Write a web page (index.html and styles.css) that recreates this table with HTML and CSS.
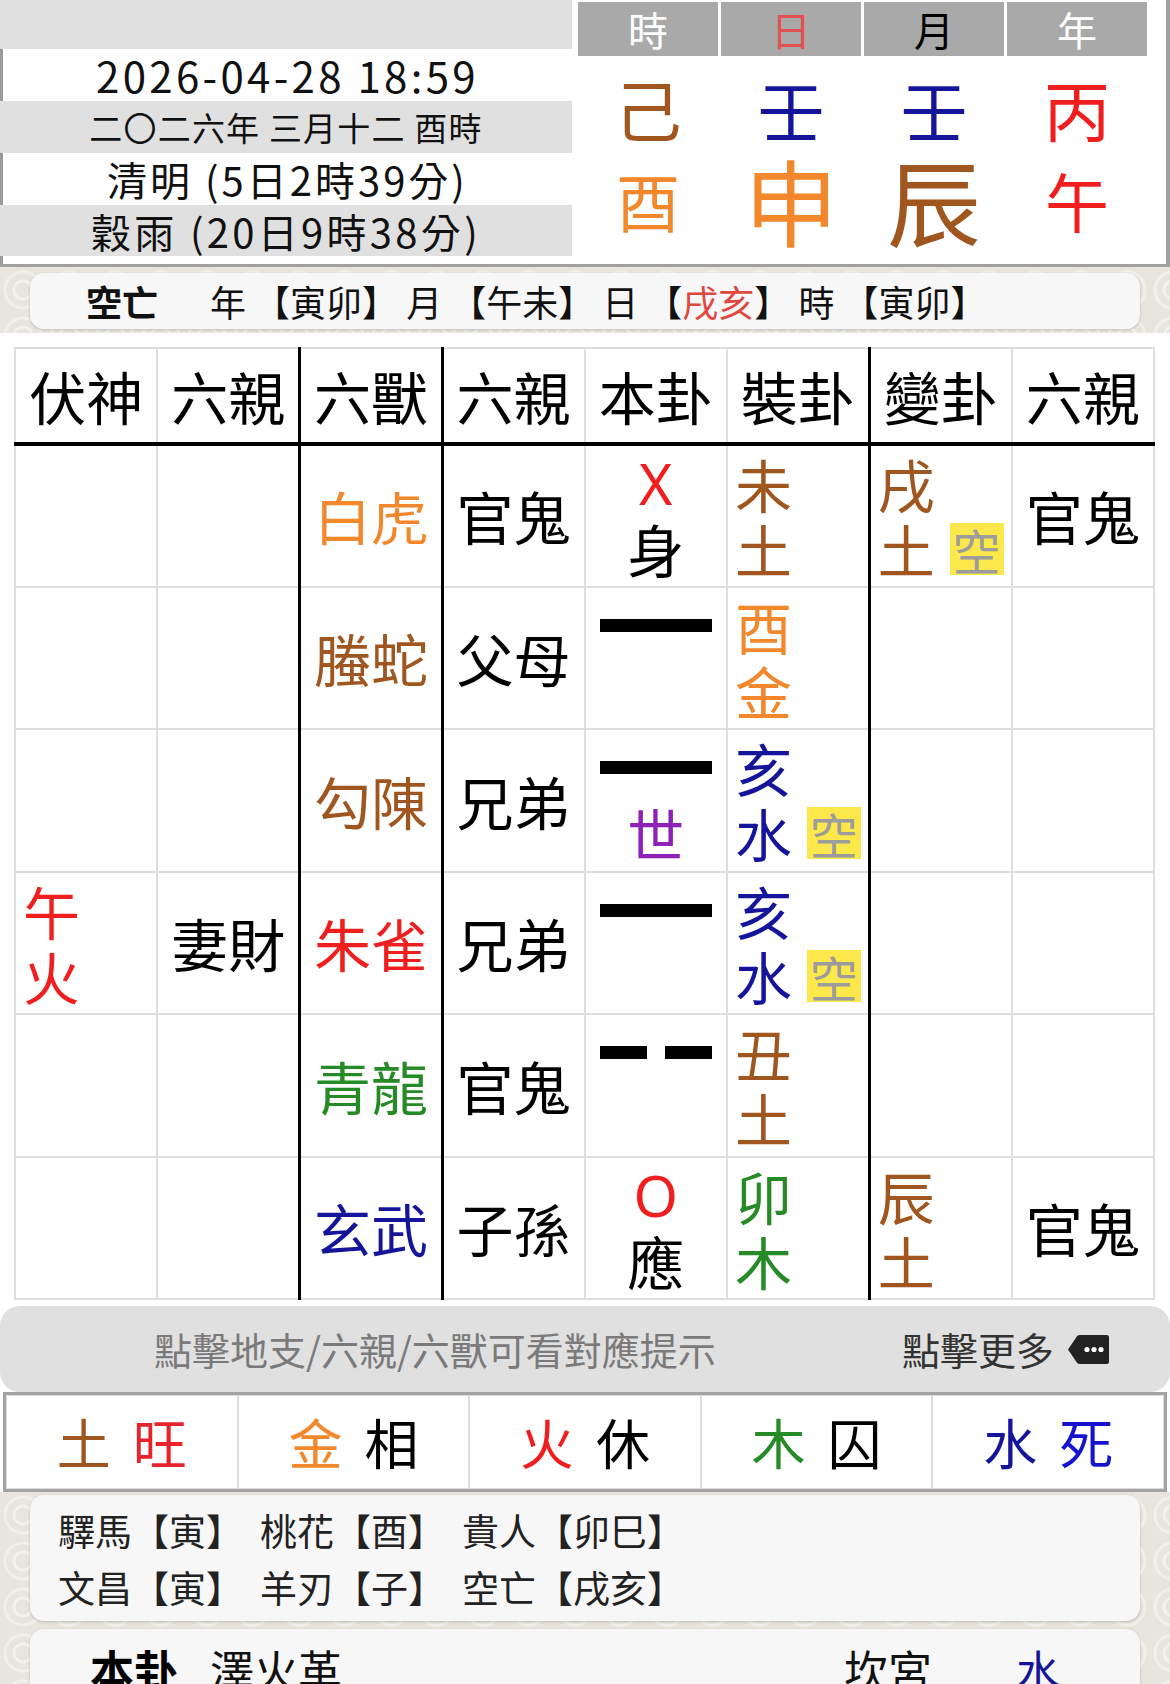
FILE: index.html
```html
<!DOCTYPE html>
<html lang="zh-Hant">
<head>
<meta charset="utf-8">
<title>六爻排盤</title>
<link rel="stylesheet" href="styles.css">
</head>
<body>
<div class="top">
  <div class="info">
    <div class="info-row g r0"></div>
    <div class="info-row w r1">2026-04-28 18:59</div>
    <div class="info-row g r2">二〇二六年 三月十二 酉時</div>
    <div class="info-row w r3">清明 (5日2時39分)</div>
    <div class="info-row g r4">穀雨 (20日9時38分)</div>
    <div class="info-row w r5"></div>
  </div>
  <div class="pillars">
    <div class="prow phead">
      <div>時</div><div class="day">日</div><div class="month">月</div><div>年</div>
    </div>
    <div class="prow stems">
      <div class="earth">己</div><div class="water">壬</div><div class="water">壬</div><div class="fire">丙</div>
    </div>
    <div class="prow branches">
      <div class="metal">酉</div><div class="metal big">申</div><div class="earth big">辰</div><div class="fire">午</div>
    </div>
  </div>
</div>

<div class="pattern strip1">
  <div class="card kongwang"><b>空亡</b><span>年 【寅卯】 月 【午未】 日 【<span class="red">戌亥</span>】 時 【寅卯】</span></div>
</div>

<div class="sheet">
  <table class="gua">
    <thead>
      <tr><th>伏神</th><th>六親</th><th>六獸</th><th>六親</th><th>本卦</th><th>裝卦</th><th>變卦</th><th>六親</th></tr>
    </thead>
    <tbody>
      <tr>
        <td></td><td></td>
        <td class="c metal">白虎</td>
        <td class="c">官鬼</td>
        <td class="yao"><div class="ln"><span class="mark">X</span></div><div class="ln">身</div></td>
        <td class="st earth"><div class="ln">未</div><div class="ln">土</div></td>
        <td class="st earth"><div class="ln">戌</div><div class="ln">土<span class="kong">空</span></div></td>
        <td class="c">官鬼</td>
      </tr>
      <tr>
        <td></td><td></td>
        <td class="c earth">螣蛇</td>
        <td class="c">父母</td>
        <td class="yao"><div class="ln"><span class="yang"></span></div><div class="ln"></div></td>
        <td class="st metal"><div class="ln">酉</div><div class="ln">金</div></td>
        <td></td><td></td>
      </tr>
      <tr>
        <td></td><td></td>
        <td class="c earth">勾陳</td>
        <td class="c">兄弟</td>
        <td class="yao"><div class="ln"><span class="yang"></span></div><div class="ln shi">世</div></td>
        <td class="st water"><div class="ln">亥</div><div class="ln">水<span class="kong">空</span></div></td>
        <td></td><td></td>
      </tr>
      <tr>
        <td class="st fire"><div class="ln">午</div><div class="ln">火</div></td>
        <td class="c">妻財</td>
        <td class="c fire">朱雀</td>
        <td class="c">兄弟</td>
        <td class="yao"><div class="ln"><span class="yang"></span></div><div class="ln"></div></td>
        <td class="st water"><div class="ln">亥</div><div class="ln">水<span class="kong">空</span></div></td>
        <td></td><td></td>
      </tr>
      <tr>
        <td></td><td></td>
        <td class="c wood">青龍</td>
        <td class="c">官鬼</td>
        <td class="yao"><div class="ln"><span class="yin"><i></i><i></i></span></div><div class="ln"></div></td>
        <td class="st earth"><div class="ln">丑</div><div class="ln">土</div></td>
        <td></td><td></td>
      </tr>
      <tr>
        <td></td><td></td>
        <td class="c water">玄武</td>
        <td class="c">子孫</td>
        <td class="yao"><div class="ln"><span class="mark">O</span></div><div class="ln">應</div></td>
        <td class="st wood"><div class="ln">卯</div><div class="ln">木</div></td>
        <td class="st earth"><div class="ln">辰</div><div class="ln">土</div></td>
        <td class="c">官鬼</td>
      </tr>
    </tbody>
  </table>

  <div class="hint">
    <span class="tip">點擊地支/六親/六獸可看對應提示</span>
    <span class="more">點擊更多
      <svg class="more-icon" width="42" height="31" viewBox="0 0 42 31" aria-hidden="true">
        <path d="M0 15.5 L9 2.2 Q10 1 12 1 H38.5 Q41 1 41 3.5 V27.5 Q41 30 38.5 30 H12 Q10 30 9 28.8 Z" fill="#222"/>
        <circle cx="19" cy="15.5" r="2.6" fill="#fff"/>
        <circle cx="26" cy="15.5" r="2.6" fill="#fff"/>
        <circle cx="33" cy="15.5" r="2.6" fill="#fff"/>
      </svg>
    </span>
  </div>

  <div class="wuxing">
    <div><span class="earth">土</span><span class="red2">旺</span></div>
    <div><span class="metal">金</span><span>相</span></div>
    <div><span class="fire">火</span><span>休</span></div>
    <div><span class="wood">木</span><span>囚</span></div>
    <div><span class="water">水</span><span class="blue2">死</span></div>
  </div>
</div>

<div class="pattern strip2">
  <div class="card shensha">
    <div class="ss-row"><span>驛馬【寅】</span><span>桃花【酉】</span><span>貴人【卯巳】</span></div>
    <div class="ss-row"><span>文昌【寅】</span><span>羊刃【子】</span><span>空亡【戌亥】</span></div>
  </div>
  <div class="card guaname">
    <b>本卦</b><span class="gname">澤火革</span>
    <span class="palace">坎宮</span><span class="water">水</span>
  </div>
</div>
</body>
</html>
```

FILE: styles.css
```css
* { box-sizing: border-box; margin: 0; padding: 0; }
html, body { width: 1170px; }
body {
  font-family: "Noto Sans CJK TC", "Noto Sans", sans-serif;
  color: #000;
  background: #fff;
  overflow: hidden;
}

/* element colours */
.earth { color: #a0571f; }
.metal { color: #f2872c; }
.water { color: #15159c; }
.fire { color: #f01e1e; }
.wood { color: #268a26; }
.red { color: #e0473f; }
.red2 { color: #e8232b; }
.blue2 { color: #1414d0; }

/* ---------- top panel ---------- */
.top {
  display: flex;
  height: 267px;
  background: #fff;
  border-right: 4px solid #a0a0a0;
  border-bottom: 3px solid #a0a0a0;
}
.info { width: 572px; display: flex; flex-direction: column; }
.info-row {
  display: flex;
  align-items: center;
  justify-content: center;
  color: #111;
  white-space: nowrap;
  line-height: 1;
}
.info-row.g { background: #e0e0e0; }
.info-row.w { background: #fff; border-left: 3px solid #9a9a9a; }
.r0 { height: 49px; }
.r1 { height: 52px; font-size: 42px; letter-spacing: 3.3px; }
.r2 { height: 52px; font-size: 33px; letter-spacing: 1.2px; }
.r3 { height: 52px; font-size: 40px; letter-spacing: 3px; }
.r4 { height: 51px; font-size: 40px; letter-spacing: 3.3px; }
.r5 { flex: 1; }

.pillars { flex: 1; padding-left: 6px; padding-top: 2px; }
.prow { display: grid; grid-template-columns: repeat(4, 140px); column-gap: 3px; text-align: center; }
.phead div {
  height: 54px;
  line-height: 54px;
  background: #a9a9a9;
  color: #fff;
  font-size: 40px;
}
.phead .day { color: #e35050; }
.phead .month { color: #000; }
.stems { margin-top: 17px; }
.stems div { height: 70px; line-height: 70px; font-size: 67px; }
.branches { margin-top: 8px; }
.branches div { height: 96px; line-height: 96px; font-size: 64px; }
.branches .big { font-size: 94px; }

/* ---------- pattern strips ---------- */
.pattern {
  background-color: #e8e5de;
  background-image:
    radial-gradient(circle, transparent 0 7px, rgba(255,255,255,.45) 8px 10px, transparent 11px 16px, rgba(255,255,255,.4) 17px 19px, transparent 20px);
  background-size: 46px 46px;
}
.card {
  background: #f7f7f7;
  border-radius: 14px;
  box-shadow: 0 1px 3px rgba(0,0,0,.2);
}
.strip1 { padding: 6px 30px 4px; }
.kongwang {
  height: 56px;
  display: flex;
  align-items: center;
  padding-left: 56px;
  font-size: 36px;
  line-height: 1;
  white-space: nowrap;
  color: #111;
}
.kongwang b { font-weight: 700; margin-right: 52px; }

/* ---------- main sheet ---------- */
.sheet { background: #fff; padding: 14px 0 0; }
.gua {
  border-collapse: collapse;
  table-layout: fixed;
  width: 1141px;
  margin-left: 14px;
  margin-bottom: 6px;
  font-size: 57px;
}
.gua th, .gua td { border: 2px solid #dedede; padding: 0; }
.gua th {
  height: 96px;
  font-weight: 400;
  border-bottom: 4px solid #000;
  line-height: 1;
}
.gua td { height: 142.5px; vertical-align: middle; }
.gua tr > :nth-child(3),
.gua tr > :nth-child(4),
.gua tr > :nth-child(7) { border-left: 3px solid #000; }
.gua td.c { text-align: center; line-height: 1; }

.gua td.st { padding: 0 7px 0 7px; }
.st .ln {
  height: 65px;
  display: flex;
  align-items: center;
  justify-content: space-between;
  line-height: 1;
}
.kong {
  display: inline-block;
  width: 54px;
  height: 52px;
  line-height: 52px;
  font-size: 48px;
  text-align: center;
  background: #fde84b;
  color: #9c9c9c;
  align-self: flex-end;
  margin-bottom: 6px;
}

.yao .ln {
  height: 65px;
  display: flex;
  align-items: center;
  justify-content: center;
  line-height: 1;
}
.yao .mark { color: #f01e1e; font-family: "Noto Sans", sans-serif; }
.yao .shi { color: #8e22b8; }
.yang { display: block; width: 112px; height: 13px; background: #000; }
.yin { display: flex; width: 112px; justify-content: space-between; }
.yin i { display: block; width: 47px; height: 13px; background: #000; }

/* ---------- hint bar ---------- */
.hint {
  height: 86px;
  background: #e0e0e0;
  border-radius: 20px;
  display: flex;
  align-items: center;
  padding-left: 154px;
  padding-right: 60px;
  font-size: 38px;
  line-height: 1;
  white-space: nowrap;
}
.tip { color: #7a7a7a; }
.more { margin-left: auto; color: #333; display: flex; align-items: center; gap: 14px; }
.more-icon { display: block; }

/* ---------- wuxing box ---------- */
.wuxing {
  display: grid;
  grid-template-columns: repeat(5, 1fr);
  height: 100px;
  margin: 0 3px;
  border: 3px solid #a3a3a3;
  background: #fff;
}
.wuxing div {
  border: 1px solid #dcdcdc;
  display: flex;
  justify-content: center;
  align-items: center;
  gap: 22px;
  font-size: 54px;
  line-height: 1;
}

/* ---------- bottom cards ---------- */
.strip2 { padding: 3px 30px 0; height: 194px; }
.shensha { height: 126px; padding: 7px 0 0 28px; font-size: 37px; color: #222; }
.ss-row { height: 57px; display: flex; align-items: center; white-space: nowrap; line-height: 1; }
.ss-row span { margin-right: 17px; }
.guaname {
  margin-top: 8px;
  height: 80px;
  display: flex;
  align-items: flex-start;
  padding: 18px 80px 0 60px;
  font-size: 44px;
  line-height: 1;
  white-space: nowrap;
  border-radius: 14px 14px 0 0;
}
.guaname b { font-weight: 700; margin-right: 32px; }
.gname { color: #111; }
.palace { margin-left: auto; margin-right: 84px; color: #111; }
```
